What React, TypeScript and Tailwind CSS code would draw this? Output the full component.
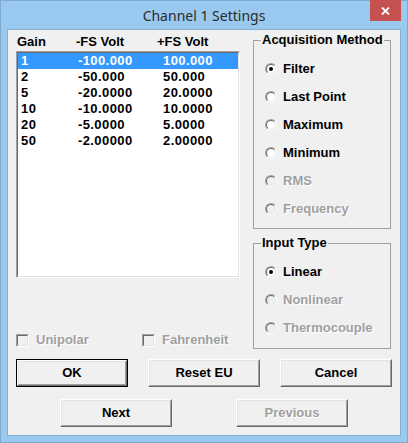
import React from "react";

const F = "font-['Liberation_Sans',Arial,sans-serif]";

function Radio({ label, checked, disabled }: { label: string; checked?: boolean; disabled?: boolean }) {
  return (
    <div className="flex items-center h-[28px]">
      <span className="w-[12px] h-[12px] rounded-full border border-t-[#a0a0a0] border-l-[#a0a0a0] border-r-white border-b-white flex">
        <span
          className={
            "flex-1 rounded-full border border-t-[#696969] border-l-[#696969] border-r-[#e3e3e3] border-b-[#e3e3e3] flex items-center justify-center " +
            (disabled ? "bg-[#f0f0f0]" : "bg-white")
          }
        >
          {checked && <span className="w-[4px] h-[4px] rounded-full bg-black" />}
        </span>
      </span>
      <span
        className={
          "ml-[6px] text-[13px] leading-[16px] font-bold " +
          (disabled ? "text-[#a0a0a0] [text-shadow:1px_1px_0_#ffffff]" : "text-black")
        }
      >
        {label}
      </span>
    </div>
  );
}

function Check({ label }: { label: string }) {
  return (
    <div className="flex items-center h-[16px]">
      <span className="w-[13px] h-[13px] border border-t-[#a0a0a0] border-l-[#a0a0a0] border-r-white border-b-white flex">
        <span className="flex-1 border border-t-[#696969] border-l-[#696969] border-r-[#e3e3e3] border-b-[#e3e3e3] bg-[#f0f0f0]" />
      </span>
      <span className="ml-[7px] text-[13px] leading-[16px] font-bold text-[#a0a0a0] [text-shadow:1px_1px_0_#ffffff]">
        {label}
      </span>
    </div>
  );
}

function Btn({ label, def, disabled }: { label: string; def?: boolean; disabled?: boolean }) {
  const inner = (
    <span className="flex-1 flex border border-t-white border-l-white border-r-[#696969] border-b-[#696969]">
      <span
        className={
          "flex-1 flex items-center justify-center border border-t-[#e3e3e3] border-l-[#e3e3e3] border-r-[#a0a0a0] border-b-[#a0a0a0] text-[13px] font-bold " +
          (disabled ? "text-[#a0a0a0] [text-shadow:1px_1px_0_#ffffff]" : "text-black")
        }
      >
        {label}
      </span>
    </span>
  );
  return (
    <div className={"w-[112px] h-[28px] flex bg-[#f0f0f0] " + (def ? "border border-[#000000]" : "")}>{inner}</div>
  );
}

const rows = [
  ["1", "-100.000", "100.000"],
  ["2", "-50.000", "50.000"],
  ["5", "-20.0000", "20.0000"],
  ["10", "-10.0000", "10.0000"],
  ["20", "-5.0000", "5.0000"],
  ["50", "-2.00000", "2.00000"],
];

export default function App() {
  return (
    <div className={"w-[408px] h-[443px] bg-[#99c9ef] border border-[#7fa9cf] flex flex-col " + F}>
      <div className="h-[29px] flex items-start relative">
        <div className="flex-1 h-[29px] flex items-center justify-center font-['Noto_Sans',sans-serif] text-[14px] text-[#2b2b2b]">
          Channel 1 Settings
        </div>
        <div className="absolute right-[6px] top-[-1px] w-[31px] h-[21px] bg-[#c75050] flex items-center justify-center">
          <svg width="9" height="8" viewBox="0 0 9 8">
            <path d="M1 0.5 L8 7.5 M8 0.5 L1 7.5" stroke="#ffffff" strokeWidth="1.8" />
          </svg>
        </div>
      </div>
      <div className="mx-[7px] w-[392px] h-[405px] bg-[#f0f0f0] outline outline-1 outline-[#86aed2] flex flex-col pt-[2px]">
        <div className="flex">
          <div className="ml-[8px] w-[224px] pt-[2px] flex flex-col">
            <div className="flex h-[16px] pl-[1px] text-[13px] leading-[16px] font-bold text-black">
              <span className="w-[59px]">Gain</span>
              <span className="w-[81px]">-FS Volt</span>
              <span>+FS Volt</span>
            </div>
            <div className="mt-[1px] h-[227px] flex border border-t-[#a0a0a0] border-l-[#a0a0a0] border-r-white border-b-white">
              <div className="flex-1 bg-white border border-t-[#696969] border-l-[#696969] border-r-[#e3e3e3] border-b-[#e3e3e3] flex flex-col">
                {rows.map((r, i) => (
                  <div
                    key={i}
                    className={
                      "flex h-[16px] pl-[3px] text-[13px] leading-[16px] font-bold tracking-[0.4px] " +
                      (i === 0 ? "bg-[#3399ff] text-white" : "text-black")
                    }
                  >
                    <span className="w-[57px]">{r[0]}</span>
                    <span className="w-[85px]">{r[1]}</span>
                    <span>{r[2]}</span>
                  </div>
                ))}
              </div>
            </div>
            <div className="mt-[54px] flex">
              <div className="w-[126px]">
                <Check label="Unipolar" />
              </div>
              <Check label="Fahrenheit" />
            </div>
          </div>
          <div className="ml-[13px] w-[138px] flex flex-col">
            <fieldset className="h-[197px] border border-[#a0a0a0] m-0 p-0 min-w-0">
              <legend className="ml-[7px] px-[1px] text-[13px] leading-[16px] font-bold text-black">
                Acquisition Method
              </legend>
              <div className="pl-[11px] pt-[7px] flex flex-col">
                <Radio label="Filter" checked />
                <Radio label="Last Point" />
                <Radio label="Maximum" />
                <Radio label="Minimum" />
                <Radio label="RMS" disabled />
                <Radio label="Frequency" disabled />
              </div>
            </fieldset>
            <fieldset className="mt-[6px] h-[114px] border border-[#a0a0a0] m-0 p-0 min-w-0">
              <legend className="ml-[7px] px-[1px] text-[13px] leading-[16px] font-bold text-black">
                Input Type
              </legend>
              <div className="pl-[11px] pt-[7px] flex flex-col">
                <Radio label="Linear" checked />
                <Radio label="Nonlinear" disabled />
                <Radio label="Thermocouple" disabled />
              </div>
            </fieldset>
          </div>
        </div>
        <div className="mt-[10px] flex justify-center gap-[20px]">
          <Btn label="OK" def />
          <Btn label="Reset EU" />
          <Btn label="Cancel" />
        </div>
        <div className="mt-[12px] flex justify-center gap-[64px]">
          <Btn label="Next" />
          <Btn label="Previous" disabled />
        </div>
      </div>
    </div>
  );
}
